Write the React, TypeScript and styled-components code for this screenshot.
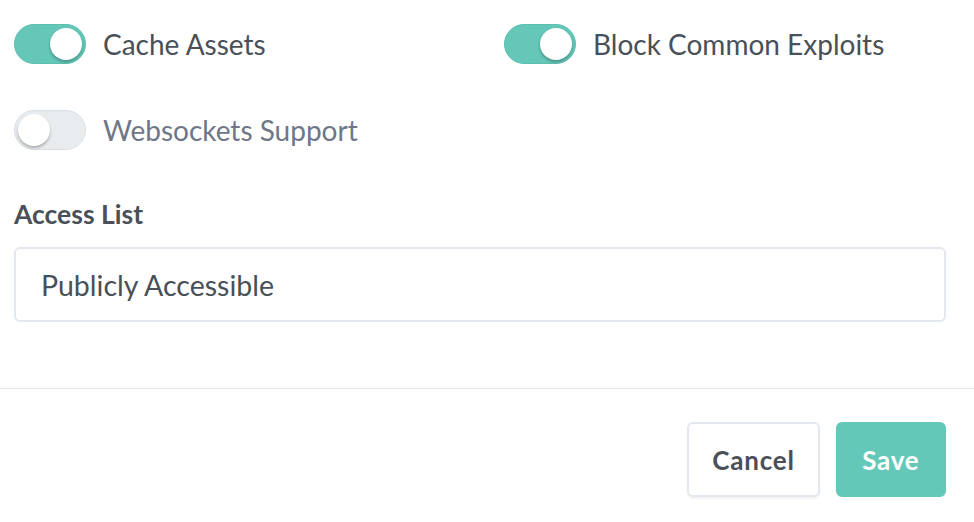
import React from 'react';
import styled, { createGlobalStyle } from 'styled-components';

const GlobalStyle = createGlobalStyle`
  * { box-sizing: border-box; }
  body {
    margin: 0;
    background: #ffffff;
    font-family: 'Lato', 'Noto Sans', sans-serif;
    color: #495057;
  }
`;

const Page = styled.div`
  width: 974px;
  height: 522px;
  overflow: hidden;
  display: flex;
  flex-direction: column;
`;

const Body = styled.div`
  padding: 24px 28px 0 14px;
  height: 389px;
  border-bottom: 1px solid #e6e8ec;
`;

const SwitchGrid = styled.div`
  display: grid;
  grid-template-columns: 490px 1fr;
  row-gap: 46px;
`;

const SwitchLabel = styled.label`
  display: flex;
  align-items: center;
  gap: 17px;
  height: 40px;
  cursor: pointer;
`;

const Track = styled.span<{ $on: boolean }>`
  position: relative;
  flex: none;
  width: 72px;
  height: 40px;
  border-radius: 20px;
  background: ${({ $on }) => ($on ? '#64c7b8' : '#e9ecef')};
  border: 1px solid ${({ $on }) => ($on ? '#5bc0b0' : '#dadfe6')};
`;

const Knob = styled.span<{ $on: boolean }>`
  position: absolute;
  top: 3px;
  left: ${({ $on }) => ($on ? '35px' : '3px')};
  width: 32px;
  height: 32px;
  border-radius: 50%;
  background: #ffffff;
  box-shadow: 0 2px 3px rgba(0, 0, 0, 0.28);
`;

const SwitchText = styled.span<{ $on: boolean }>`
  font-size: 28px;
  color: ${({ $on }) => ($on ? '#495057' : '#6e7687')};
`;

const FormGroup = styled.div`
  margin-top: 46px;
`;

const FieldLabel = styled.div`
  font-size: 26.5px;
  font-weight: 700;
  color: #495057;
  line-height: 36px;
  margin-bottom: 15px;
`;

const Field = styled.div`
  height: 75px;
  border: 2px solid #e3e7ee;
  border-radius: 6px;
  display: flex;
  align-items: center;
  padding: 0 25px;
  font-size: 28.5px;
  color: #495057;
`;

const Footer = styled.div`
  display: flex;
  justify-content: flex-end;
  gap: 16px;
  padding: 33px 28px 0 0;
`;

const Button = styled.button<{ $primary?: boolean }>`
  height: 75px;
  padding: 0 ${({ $primary }) => ($primary ? '24.5px' : '23px')};
  border-radius: 6px;
  font-family: inherit;
  font-size: 26px;
  font-weight: 700;
  letter-spacing: 0.03em;
  cursor: pointer;
  background: ${({ $primary }) => ($primary ? '#64c8b9' : '#ffffff')};
  color: ${({ $primary }) => ($primary ? '#ffffff' : '#495057')};
  border: 2px solid ${({ $primary }) => ($primary ? '#64c8b9' : '#e3e7ee')};
  box-shadow: ${({ $primary }) => ($primary ? 'none' : '0 2px 2px rgba(0,0,0,0.05)')};
`;

const Switch: React.FC<{ on: boolean; label: string }> = ({ on, label }) => (
  <SwitchLabel>
    <Track $on={on}>
      <Knob $on={on} />
    </Track>
    <SwitchText $on={on}>{label}</SwitchText>
  </SwitchLabel>
);

const App: React.FC = () => (
  <Page>
    <GlobalStyle />
    <Body>
      <SwitchGrid>
        <Switch on label="Cache Assets" />
        <Switch on label="Block Common Exploits" />
        <Switch on={false} label="Websockets Support" />
      </SwitchGrid>
      <FormGroup>
        <FieldLabel>Access List</FieldLabel>
        <Field>Publicly Accessible</Field>
      </FormGroup>
    </Body>
    <Footer>
      <Button>Cancel</Button>
      <Button $primary>Save</Button>
    </Footer>
  </Page>
);

export default App;
